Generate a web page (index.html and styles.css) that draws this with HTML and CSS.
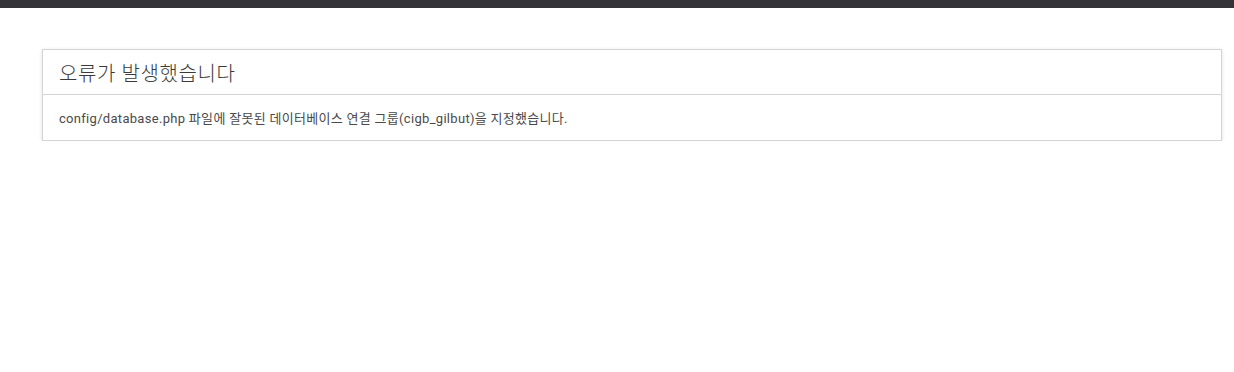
FILE: index.html
```html
<!DOCTYPE html>
<html lang="ko">
<head>
  <meta charset="UTF-8" />
  <meta name="viewport" content="width=device-width, initial-scale=1.0"/>
  <title>Error</title>
  <link rel="stylesheet" href="styles.css">
</head>
<body>

  <div class="topbar"></div>

  <main>
    <section class="panel">
      <div class="panel-heading">
        <h3>오류가 발생했습니다</h3>
      </div>
      <div class="panel-body">
        config/database.php 파일에 잘못된 데이터베이스 연결 그룹(cigb_gilbut)을 지정했습니다.
      </div>
    </section>
  </main>

</body>
</html>
```

FILE: styles.css
```css
body {margin: 0; font-family: Roboto, "Noto Sans CJK KR", sans-serif; background-color: #fff; color: #333;}
.topbar {height: 8px; background-color: #343438;}
main {padding: 41px 12px 0 42px;}
.panel {border: 1px solid #d4d4d4; box-shadow: 0 1px 4px rgba(0,0,0,0.12); background-color: #fff;}
.panel-heading {height: 44px; padding: 0 16px; border-bottom: 1px solid #d4d4d4; display: flex; align-items: center;}
.panel-heading h3 {margin: 0; font-size: 20px; font-weight: 300; letter-spacing: 0.6px; color: #3a3a3a;}
.panel-body {height: 45px; padding: 0 16px; display: flex; align-items: center; font-size: 13px; letter-spacing: 0.3px; color: #4a4a4a;}
```
